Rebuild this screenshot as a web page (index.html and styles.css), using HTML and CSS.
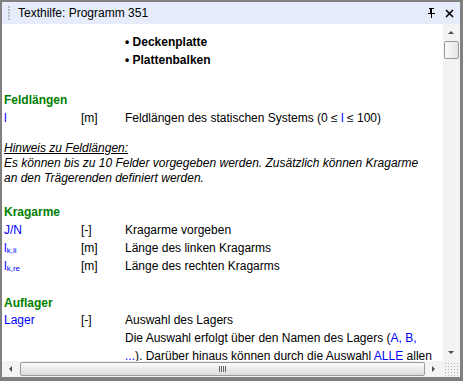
FILE: index.html
```html
<!DOCTYPE html>
<html lang="de">
<head>
    <meta charset="UTF-8">
    <title>Texthilfe: Programm 351</title>
    <link rel="stylesheet" href="styles.css">
</head>
<body>

<div class="window">
    <div class="titlebar">
        <span class="grip"></span>
        <span class="title">Texthilfe: Programm 351</span>
        <span class="tools">
            <svg width="9" height="10" viewBox="0 0 9 10"><path d="M2 0h5v1H6v4h2v1H5v4H4V6H1V5h2V1H2z" fill="#000"/><path d="M5 1h1v4H5z" fill="#fff"/></svg>
            <svg width="9" height="9" viewBox="0 0 9 9"><path d="M1 1L8 8M8 1L1 8" stroke="#000" stroke-width="1.6"/></svg>
        </span>
    </div>

    <div class="main">
        <div class="content">
            <div class="bullets">
                <div>&bull; Deckenplatte</div>
                <div>&bull; Plattenbalken</div>
            </div>

            <div class="heading">Feldlängen</div>
            <div class="row">
                <span class="name">l</span>
                <span class="unit">[m]</span>
                <span class="desc">Feldlängen des statischen Systems (0 ≤ <span class="var">l</span> ≤ 100)</span>
            </div>

            <div class="note">
                <div class="note-title">Hinweis zu Feldlängen:</div>
                Es können bis zu 10 Felder vorgegeben werden. Zusätzlich können Kragarme<br>
                an den Trägerenden definiert werden.
            </div>

            <div class="heading">Kragarme</div>
            <div class="row">
                <span class="name">J/N</span>
                <span class="unit">[-]</span>
                <span class="desc">Kragarme vorgeben</span>
            </div>
            <div class="row">
                <span class="name">l<sub>k,li</sub></span>
                <span class="unit">[m]</span>
                <span class="desc">Länge des linken Kragarms</span>
            </div>
            <div class="row">
                <span class="name">l<sub>k,re</sub></span>
                <span class="unit">[m]</span>
                <span class="desc">Länge des rechten Kragarms</span>
            </div>

            <div class="heading last">Auflager</div>
            <div class="row">
                <span class="name">Lager</span>
                <span class="unit">[-]</span>
                <span class="desc">Auswahl des Lagers<br>
                    Die Auswahl erfolgt über den Namen des Lagers (<span class="var">A, B,</span><br>
                    <span class="var">...</span>). Darüber hinaus können durch die Auswahl <span class="var">ALLE</span> allen</span>
            </div>
        </div>

        <div class="vscroll">
            <div class="arrow up"></div>
            <div class="vtrack">
                <div class="vthumb"></div>
            </div>
            <div class="arrow down"></div>
        </div>
    </div>

    <div class="hscroll">
        <div class="harrow left"></div>
        <div class="htrack">
            <div class="hthumb"><span class="lines"></span></div>
        </div>
        <div class="harrow right"></div>
        <div class="corner"></div>
    </div>
</div>

</body>
</html>
```

FILE: styles.css
```css
body {
    margin: 0;
    font-family: "Liberation Sans", Arial, sans-serif;
    font-size: 12px;
    color: #000;
    background: #fff;
}

.window {
    width: 463px;
    height: 381px;
    box-sizing: border-box;
    border: 2px solid #808080;
    border-right-width: 3px;
    border-bottom-width: 4px;
    display: flex;
    flex-direction: column;
    background: #fff;
}

.titlebar {
    height: 22px;
    flex: none;
    display: flex;
    align-items: center;
    background: #e6ecfa;
}

.grip {
    width: 2px;
    height: 14px;
    margin-left: 6px;
    margin-right: 8px;
    background: repeating-linear-gradient(#b8bcc8 0 2px, transparent 2px 3px);
}

.title {
    flex: 1;
}

.tools {
    display: flex;
    align-items: center;
    gap: 9px;
    margin-right: 6px;
}

.main {
    flex: 1;
    display: flex;
    min-height: 0;
}

.content {
    flex: 1;
    overflow: hidden;
    padding: 9px 0 0 2px;
    white-space: nowrap;
}

.bullets {
    padding-left: 121px;
    font-weight: bold;
    line-height: 18px;
}

.heading {
    color: #008000;
    font-weight: bold;
    line-height: 15px;
    margin: 19px 0 1px;
}

.bullets + .heading {
    margin-top: 24px;
}

.heading.last {
    margin-top: 21px;
    margin-bottom: 0;
}

.row {
    display: flex;
    line-height: 18px;
}

.name {
    width: 77px;
    color: #0000ff;
}

.name sub {
    font-size: 8px;
    line-height: 0;
    vertical-align: -1px;
}

.unit {
    width: 44px;
}

.var {
    color: #0000ff;
}

.note {
    font-style: italic;
    line-height: 15px;
    margin-top: 14px;
}

.note-title {
    text-decoration: underline;
}

.vscroll {
    width: 17px;
    flex: none;
    display: flex;
    flex-direction: column;
    background: #f3f3f1;
}

.arrow {
    height: 17px;
    position: relative;
}

.arrow::after {
    content: "";
    position: absolute;
    left: 5px;
    top: 7px;
    border-left: 3px solid transparent;
    border-right: 3px solid transparent;
}

.arrow.up::after {
    border-bottom: 3px solid #4c4c4c;
}

.arrow.down::after {
    border-top: 3px solid #4c4c4c;
}

.vtrack {
    flex: 1;
}

.vthumb {
    height: 16px;
    margin: 0 1px;
    border: 1px solid #999;
    border-radius: 2px;
    background: linear-gradient(to right, #fafafa, #e4e4e4);
}

.hscroll {
    height: 16px;
    flex: none;
    display: flex;
    background: #f3f3f1;
}

.harrow {
    width: 18px;
    position: relative;
}

.harrow::after {
    content: "";
    position: absolute;
    top: 5px;
    left: 7px;
    border-top: 3px solid transparent;
    border-bottom: 3px solid transparent;
}

.harrow.left::after {
    border-right: 3px solid #4c4c4c;
}

.harrow.right::after {
    border-left: 3px solid #4c4c4c;
}

.htrack {
    flex: 1;
    display: flex;
}

.hthumb {
    flex: 1;
    margin: 1px 0;
    border: 1px solid #999;
    border-radius: 2px;
    background: linear-gradient(#fafafa, #dcdcdc);
    display: flex;
    align-items: center;
    justify-content: center;
}

.lines {
    width: 7px;
    height: 6px;
    background: repeating-linear-gradient(to right, #666 0 1px, transparent 1px 2px);
}

.corner {
    width: 17px;
    background: radial-gradient(circle, #b5b5b5 0.6px, transparent 0.8px) 4px 4px / 3px 3px;
}
```
